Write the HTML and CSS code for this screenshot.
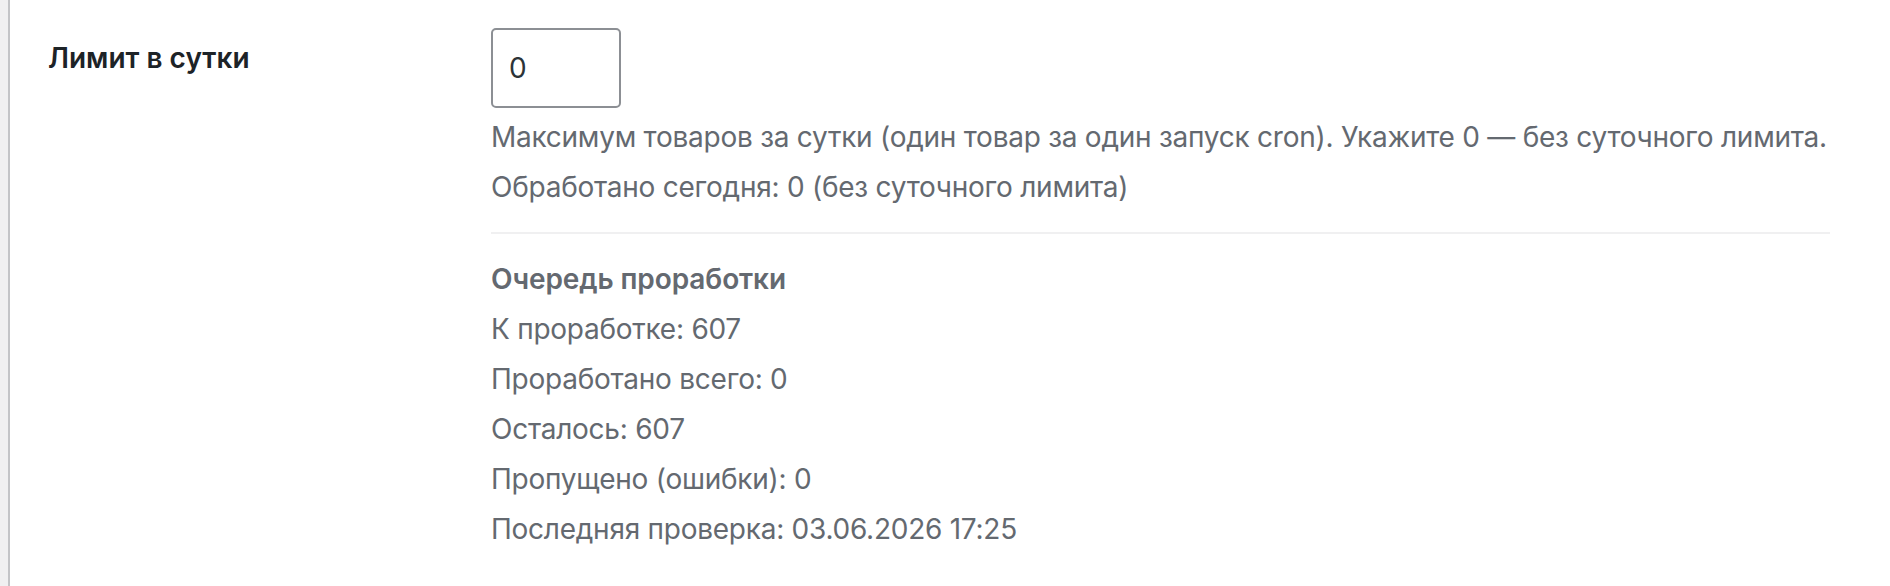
FILE: index.html
```html
<!DOCTYPE html>
<html lang="ru">
<head>
<meta charset="utf-8">
<title>Лимит в сутки</title>
<link rel="stylesheet" href="styles.css">
</head>
<body>
<div class="page">
  <div class="gutter"></div>
  <div class="panel">
    <div class="row">
      <div class="label">Лимит в сутки</div>
      <div class="field">
        <input class="num" type="number" value="0">
        <p class="desc">Максимум товаров за сутки (один товар за один запуск cron). Укажите 0 — без суточного лимита.</p>
        <p class="desc">Обработано сегодня: 0 (без суточного лимита)</p>
        <div class="queue">
          <p class="desc head">Очередь проработки</p>
          <p class="desc">К проработке: 607</p>
          <p class="desc">Проработано всего: 0</p>
          <p class="desc">Осталось: 607</p>
          <p class="desc">Пропущено (ошибки): 0</p>
          <p class="desc">Последняя проверка: 03.06.2026 17:25</p>
        </div>
      </div>
    </div>
  </div>
</div>
</body>
</html>
```
FILE: styles.css
```css
html, body {
  margin: 0;
  padding: 0;
  background: #ffffff;
  height: 100%;
}
body {
  font-family: Inter, "Noto Sans", sans-serif;
  overflow: hidden;
}
.page {
  display: flex;
  min-height: 586px;
}
.gutter {
  width: 8px;
  background: #f0f0f1;
  border-right: 2px solid #c3c4c7;
  flex: none;
}
.panel {
  flex: 1;
  padding-left: 38px;
}
.row {
  display: flex;
}
.label {
  width: 443px;
  flex: none;
  padding-top: 40px;
  font-size: 28px;
  font-weight: 600;
  line-height: 36px;
  color: #1d2327;
}
.field {
  padding-top: 28px;
  width: 1339px;
}
.num {
  display: block;
  box-sizing: border-box;
  width: 130px;
  height: 80px;
  margin: 0;
  padding: 0 16px;
  border: 2px solid #8c8f94;
  border-radius: 5px;
  font-family: inherit;
  font-size: 28px;
  color: #2c3338;
  background: #fff;
  -moz-appearance: textfield;
}
.num::-webkit-inner-spin-button,
.num::-webkit-outer-spin-button {
  -webkit-appearance: none;
  margin: 0;
}
.desc {
  margin: 8px 0 0;
  font-size: 28px;
  line-height: 42px;
  letter-spacing: -0.25px;
  white-space: nowrap;
  color: #646970;
}
.queue {
  margin-top: 24px;
  padding-top: 24px;
  border-top: 2px solid #f0f0f1;
}
.queue .head {
  margin-top: 0;
  font-weight: 600;
  letter-spacing: -0.1px;
}
```
